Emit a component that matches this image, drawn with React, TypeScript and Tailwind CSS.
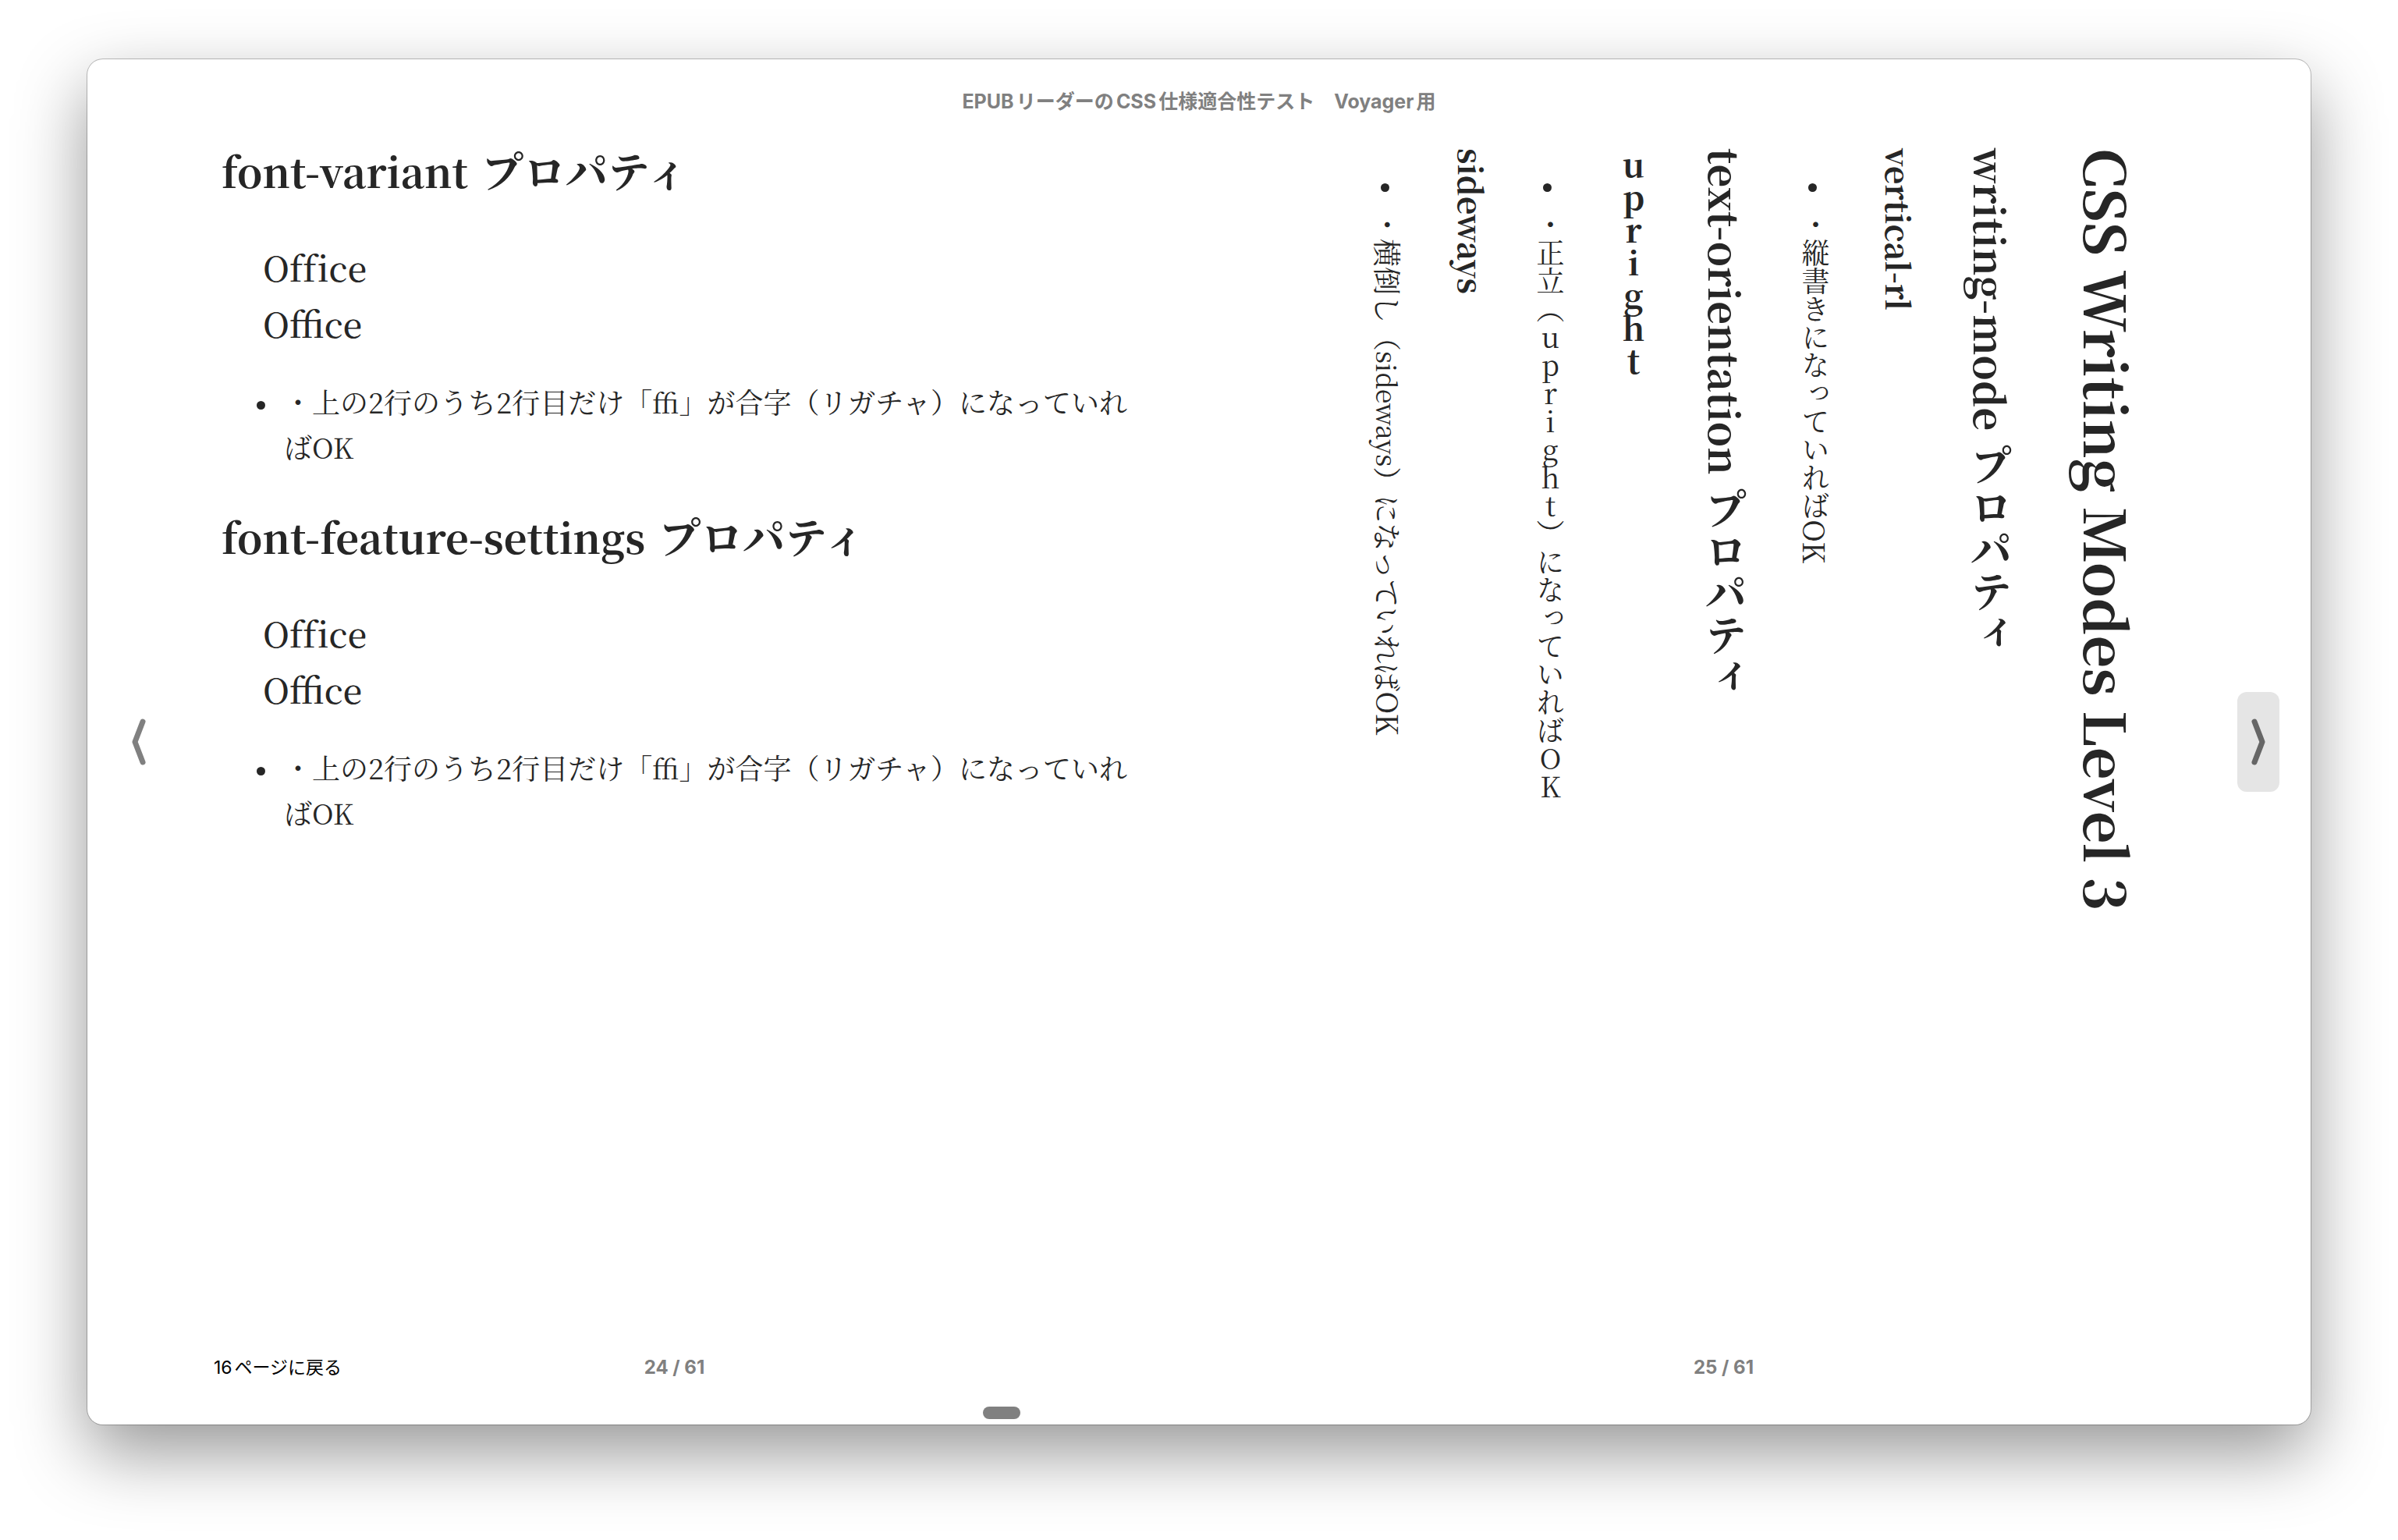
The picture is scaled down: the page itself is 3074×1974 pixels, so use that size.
import type { ReactNode } from "react";

const SERIF = "font-['Noto_Serif_CJK_JP','Noto_Sans_CJK_JP',serif]";
const SANS = "font-[Inter,'Noto_Sans_CJK_JP',sans-serif]";

function Bullet({ children }: { children: ReactNode }) {
  return (
    <li className="flex text-[36px] leading-[58px]">
      <span
        aria-hidden="true"
        className="flex shrink-0 items-center justify-end self-start ps-0 pe-6 [block-size:58px] [inline-size:80px] [padding-block-start:8px]"
      >
        <span className="size-[11px] rounded-full bg-[#262626]" />
      </span>
      <span>{children}</span>
    </li>
  );
}

function PropertyHeading({ name, className }: { name: string; className: string }) {
  return (
    <h2 className={`text-[54px] font-bold ${className}`}>
      <span className="me-1 text-[52px] leading-none">{name} </span>プロパティ
    </h2>
  );
}

function LigatureSection({ name, mode }: { name: string; mode: "variant" | "feature" }) {
  const off = mode === "variant" ? "[font-variant-ligatures:none]" : "[font-feature-settings:'liga'_0]";
  const on =
    mode === "variant"
      ? "[font-variant-ligatures:common-ligatures]"
      : "[font-feature-settings:'liga'_1]";
  return (
    <section className="h-[469px]">
      <PropertyHeading name={name} className="leading-[56px]" />
      <div className="mt-[60px] ps-[53px] text-[44px] leading-[72px] font-medium">
        <p className={off}>Office</p>
        <p className={on}>Office</p>
      </div>
      <ul className="mt-9">
        <Bullet>
          ・上の2行のうち2行目だけ「<span className="text-[34px] leading-none">ffi</span>
          」が合字（リガチャ）になっていればOK
        </Bullet>
      </ul>
    </section>
  );
}

function Chevron({ flip = false }: { flip?: boolean }) {
  return (
    <svg viewBox="0 0 18 60" className="h-[60px] w-[18px]" fill="none" stroke="currentColor" strokeWidth="7" strokeLinecap="round" strokeLinejoin="round" aria-hidden="true">
      <path d={flip ? "M4 4 14 30 4 56" : "M14 4 4 30 14 56"} />
    </svg>
  );
}

export default function App() {
  return (
    <div className="flex min-h-screen flex-col bg-white px-28 pt-[76px] pb-[148px]">
      <div
        className={`flex grow flex-col rounded-[20px] bg-white text-[#262626] shadow-[0_0_0_1px_rgba(0,0,0,0.24),0_36px_90px_rgba(0,0,0,0.41)] ${SANS}`}
      >
        <header className="pt-9 text-center">
          <h1 className="text-[25px] leading-9 font-bold text-[#808080] [text-autospace:normal]">
            EPUBリーダーのCSS仕様適合性テスト　Voyager用
          </h1>
        </header>
        <div className="flex grow pt-[42px]">
          <div className="flex w-[80px] shrink-0 items-start justify-end pt-[697px] pr-1">
            <button aria-label="前のページ" className="flex h-[128px] w-5 items-center justify-center rounded-xl text-[#808080]">
              <Chevron />
            </button>
          </div>
          <main className={`grid grow grid-cols-2 ${SERIF}`}>
            <article lang="ja" className="ps-[92px] pe-20">
              <LigatureSection name="font-variant" mode="variant" />
              <LigatureSection name="font-feature-settings" mode="feature" />
            </article>
            <article lang="ja" className="ps-[92px] pe-32">
              <div className="ml-auto w-fit [writing-mode:vertical-rl]">
                <h1 className="text-[73px] leading-[100px] font-bold">CSS Writing Modes Level 3</h1>
                <PropertyHeading name="writing-mode" className="mr-[60px] leading-[80px]" />
                <h3 className="mr-[52px] text-[41px] leading-[52px] font-bold">vertical-rl</h3>
                <ul className="mr-[52px]">
                  <Bullet>
                    ・縦書きになっていれば<span className="text-[38px] leading-none">OK</span>
                  </Bullet>
                </ul>
                <PropertyHeading name="text-orientation" className="mr-[46px] leading-[80px]" />
                <h3 className="mr-[52px] text-[42px] leading-[52px] font-bold [text-orientation:upright]">
                  upright
                </h3>
                <ul className="mr-[52px] [text-orientation:upright]">
                  <Bullet>・正立（upright）になっていればOK</Bullet>
                </ul>
                <h3 className="mr-[46px] text-[41px] leading-[52px] font-bold [text-orientation:sideways]">
                  sideways
                </h3>
                <ul className="mr-[52px] [text-orientation:sideways]">
                  <Bullet>
                    ・横倒し（<span className="text-[34px] leading-none">sideways</span>）になっていれば
                    <span className="text-[38px] leading-none">OK</span>
                  </Bullet>
                </ul>
              </div>
            </article>
          </main>
          <div className="flex w-[82px] shrink-0 items-start justify-end pt-[697px] pr-10">
            <button aria-label="次のページ" className="flex h-[128px] w-[54px] shrink-0 items-center justify-center rounded-xl bg-[#e5e5e5] text-[#666]">
              <Chevron flip />
            </button>
          </div>
        </div>
        <footer className="flex flex-col">
          <div className="grid grid-cols-2 px-20 leading-8">
            <div className="grid grid-cols-3 px-[82px]">
              <a href="#page-16" className="text-[23px] text-black [text-autospace:normal]">
                16ページに戻る
              </a>
              <span className="text-center text-[24px] font-bold text-[#808080]">24 / 61</span>
            </div>
            <span className="text-center text-[24px] font-bold text-[#808080]">25 / 61</span>
          </div>
          <input
            type="range"
            aria-label="ページ位置"
            min={0}
            max={61}
            defaultValue={25}
            className="mt-[34px] mb-[7px] h-4 w-full appearance-none bg-transparent [&::-webkit-slider-thumb]:h-4 [&::-webkit-slider-thumb]:w-12 [&::-webkit-slider-thumb]:appearance-none [&::-webkit-slider-thumb]:rounded-lg [&::-webkit-slider-thumb]:bg-[#808080]"
          />
        </footer>
      </div>
    </div>
  );
}
